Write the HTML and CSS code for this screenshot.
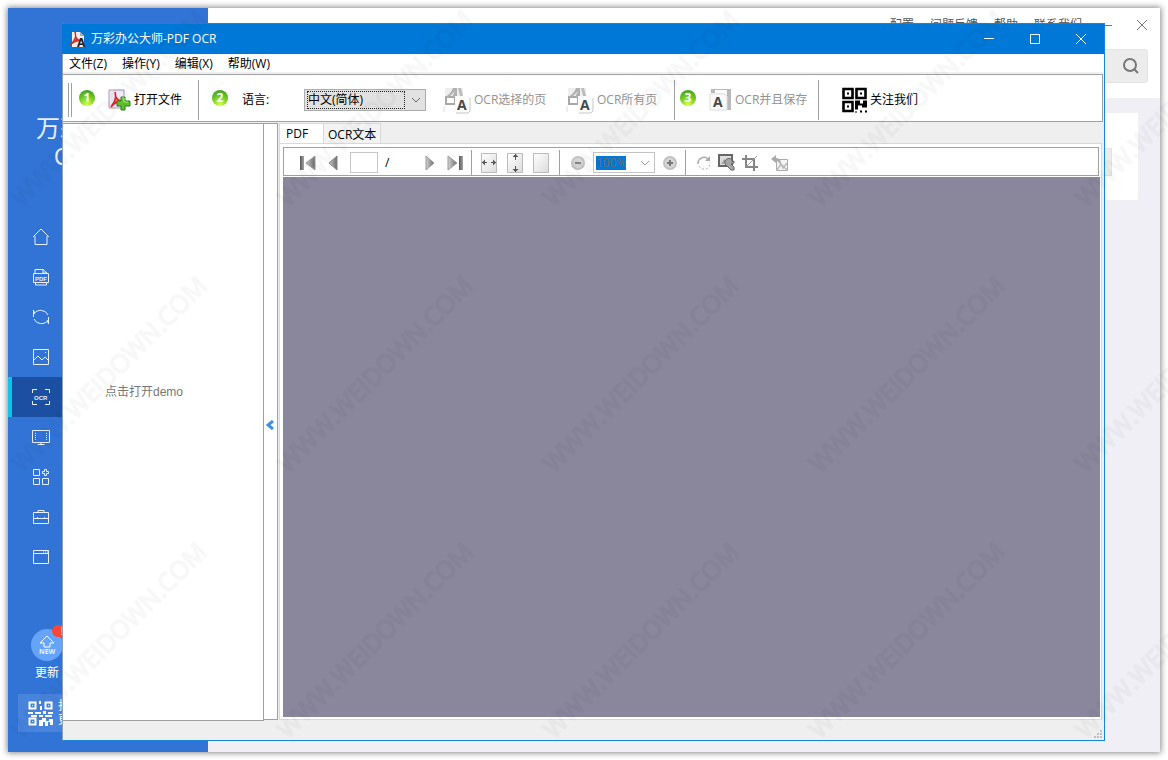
FILE: index.html
```html
<!DOCTYPE html>
<html lang="zh-CN">

<head>
    <meta charset="UTF-8">
    <meta name="viewport" content="width=device-width, initial-scale=1.0">
    <title>万彩办公大师-PDF OCR</title>
    <link rel="stylesheet" href="styles.css">
</head>

<body>

    <!-- shared symbols -->
    <svg class="defs" aria-hidden="true">
        <defs>
            <linearGradient id="metal" x1="0" x2="1">
                <stop offset="0" stop-color="#d4d4d4" />
                <stop offset="1" stop-color="#686868" />
            </linearGradient>
            <linearGradient id="paper" x1="0" y1="0" x2="1" y2="1">
                <stop offset="0" stop-color="#ffffff" />
                <stop offset="1" stop-color="#dcdcdc" />
            </linearGradient>
            <linearGradient id="dark" x1="0" x2="1">
                <stop offset="0" stop-color="#555555" />
                <stop offset="1" stop-color="#a5a5a5" />
            </linearGradient>
            <symbol id="ocr-page" viewBox="0 0 28 28">
                <path d="M2 2h18v17H2z" fill="#eeeeee" />
                <path d="M3 18v-7h9v7z" fill="#fff" stroke="#a8a8a8" stroke-width="2" />
                <path d="M2 11C6 9 9 5 10 2l4 0v9H9l3-6-6 6z" fill="#b0b0b0" />
                <path d="M15 2h3l2 8h-3z" fill="#bcbcbc" />
                <path d="M1 20v6" stroke="#ddd" />
                <path d="M12 10h13l2 2v15H12z" fill="#fcfcfc" />
                <path d="M27 12v13l-2 2H13" fill="none" stroke="#c8c8c8" />
                <text x="14" y="24" class="icon-a">A</text>
            </symbol>
            <symbol id="qr" viewBox="0 0 25 25">
                <path d="M1.500 1.500h9v9h-9zM14.500 1.500h9v9h-9zM1.500 14.500h9v9h-9z" fill="none" stroke="currentColor" stroke-width="2.600" />
                <path d="M5 5h2v2H5zM18 5h2v2h-2zM5 18h2v2H5zM13 13h5v3h3v-3h4v7h-5v-2h-4v4h-3zM13 24h2v1h-2zM18 23h2v2h-2zM23 23h2v2h-2z" fill="currentColor" />
            </symbol>
        </defs>
    </svg>

    <main class="desktop">

        <!-- background window -->
        <div class="launcher">
            <aside class="sidebar">
                <h1>万彩办公大师<br>OfficeBox</h1>
                <nav class="side-nav">
                    <a href="#" aria-label="首页"><svg viewBox="0 0 18 18"><path d="M1 9 9 1l8 8M3 8v8.500h12V8" /></svg></a>
                    <a href="#" aria-label="PDF"><svg viewBox="0 0 18 18"><path d="M3 5V1.500h8l4 3.500M11 1.500V5h4M1.500 5.500h15v9h-15zM3.500 15v2h11v-2" /><text x="3" y="12.500" class="tiny">PDF</text></svg></a>
                    <a href="#" aria-label="转换"><svg viewBox="0 0 18 18"><path d="M1.500 9V2l1 3M2 6a8 8 0 0 1 14 1M16.500 9v7l-1-3M16 12a8 8 0 0 1-14-1" /></svg></a>
                    <a href="#" aria-label="图片"><svg viewBox="0 0 18 18"><path d="M1.500 1.500h15v15h-15zM2 12l4-4 4 4 3-3 4 4M13 4.500h1" /></svg></a>
                    <a href="#" aria-label="OCR" class="active"><svg viewBox="0 0 18 18"><path d="M.5 5V1.500H5M13 1.500h4.500V5M.5 13v3.500H5M13 16.500h4.500V13" /><text x="2" y="12" class="tiny">OCR</text></svg></a>
                    <a href="#" aria-label="录屏"><svg viewBox="0 0 18 18"><path d="M.5 2.500h17v12H.5zM9 15v2M5.500 16.500h7" /><path d="M3.500 5v8M14.500 5v8" stroke-dasharray="1 1" /></svg></a>
                    <a href="#" aria-label="工具"><svg viewBox="0 0 18 18"><path d="M1.500 1.500h6v6h-6zM1.500 10.500h6v6h-6zM10.500 10.500h6v6h-6zM12.500 1.500h2v2h2v2h-2v2h-2v-2h-2v-2h2z" /></svg></a>
                    <a href="#" aria-label="办公"><svg viewBox="0 0 18 18"><path d="M1.500 4.500h15v11h-15zM6 4V2.500h6V4M1.500 10.500h15M5.500 9v2M12.500 9v2" /></svg></a>
                    <a href="#" aria-label="窗口"><svg viewBox="0 0 18 18"><path d="M1.500 2.500h15v13h-15zM2 5.500h15M11 4h1M13 4h1M15 4h1" /></svg></a>
                </nav>
                <div class="update">
                    <button type="button" aria-label="更新">
                        <svg viewBox="0 0 18 20"><path d="m9 1 7 7h-4v4H6V8H2z" /><text x="1" y="18.500" class="new">NEW</text></svg>
                        <span class="dot">!</span>
                    </button>
                    <span>更新</span>
                </div>
                <div class="follow">
                    <svg viewBox="0 0 25 25"><path d="M1.500 1.500h6v6h-6zM17.500 1.500h6v6h-6zM1.500 17.500h6v6h-6z" fill="none" stroke="currentColor" stroke-width="2" /><path d="M4 4h1v1H4zM20 4h1v1h-1zM4 20h1v1H4zM11 0h2v3h-2zM12 5h2v4h-2zM0 11h5v2H0zM7 11h6v2H7zM15 10h3v3h-3zM20 11h5v2h-5zM3 14h6v2H3zM11 14h4v2h-4zM17 14h7v2h-7zM11 19h3v-2h4v3h3v-2h4v6h-3v-3h-2v4h-3v-4h-2v4h-4z" fill="currentColor" /></svg>
                    <span>扫码关注<br>更多惊喜</span>
                </div>
            </aside>

            <section class="launcher-main">
                <header class="launcher-head">
                    <nav class="top-nav">
                        <a href="#">配置</a>
                        <a href="#">问题反馈</a>
                        <a href="#">帮助</a>
                        <a href="#">联系我们</a>
                        <button type="button" aria-label="最小化"><svg viewBox="0 0 12 12"><path d="M0 6.500h12" /></svg></button>
                        <button type="button" aria-label="关闭"><svg viewBox="0 0 12 12"><path d="m1 1 10 10M11 1 1 11" /></svg></button>
                    </nav>
                    <div class="search">
                        <input type="text" aria-label="搜索">
                        <svg viewBox="0 0 16 16"><circle cx="7" cy="7" r="6" /><path d="m11 11 4 4" /></svg>
                    </div>
                </header>
                <div class="card"><div class="card-field"></div></div>
            </section>
        </div>

        <!-- PDF OCR window -->
        <div class="window">
            <header class="titlebar">
                <svg class="app-icon" viewBox="0 0 17 17">
                    <path d="M3 1h8l4 4v11H3z" fill="#f3eded" />
                    <path d="M11 1v4h4" fill="#aaa" />
                    <path d="M1 14C5 10 8 5 6 1c0 6 4 9 8 9-5-1-9 1-13 4z" fill="#e8372c" stroke="#b92722" />
                    <text x="8" y="16" class="icon-a">A</text>
                </svg>
                <span class="title">万彩办公大师-PDF OCR</span>
                <button type="button" aria-label="最小化"><svg viewBox="0 0 12 12"><path d="M1 5.500h10" /></svg></button>
                <button type="button" aria-label="最大化"><svg viewBox="0 0 12 12"><path d="M1.500 1.500h9v9h-9z" /></svg></button>
                <button type="button" aria-label="关闭"><svg viewBox="0 0 12 12"><path d="m1 1 10 10M11 1 1 11" /></svg></button>
            </header>

            <nav class="menubar">
                <button type="button">文件(Z)</button>
                <button type="button">操作(Y)</button>
                <button type="button">编辑(X)</button>
                <button type="button">帮助(W)</button>
            </nav>

            <div class="toolbar">
                <div class="grip"></div>
                <div class="group open">
                    <span class="step">1</span>
                    <button type="button">
                        <svg width="23" height="22" viewBox="0 0 23 22">
                            <path d="M1 1h15v18H1z" fill="#f1e9f8" stroke="#a99cb5" />
                            <path d="M3 18C6 14 9 8 7 3c0 6 3 9 8 9-5 0-9 2-12 6z" fill="#ff7160" stroke="#df2222" stroke-width="1.500" />
                            <path d="M13 8h4v4h5v5h-5v4h-4v-4H9v-5h4z" fill="#5fc52e" stroke="#267d20" />
                            <path d="M14 9h2v4h4" fill="none" stroke="#a9ec78" />
                        </svg>
                        打开文件
                    </button>
                </div>
                <div class="group language">
                    <span class="step">2</span>
                    <label for="lang">语言:</label>
                    <div class="select">
                        <select id="lang">
                            <option>中文(简体)</option>
                            <option>English</option>
                        </select>
                        <svg viewBox="0 0 10 6"><path d="m1 1 4 4 4-4" /></svg>
                    </div>
                    <button type="button" class="ocr-selected" disabled><svg width="28" height="28"><use href="#ocr-page" /></svg>OCR选择的页</button>
                    <button type="button" class="ocr-all" disabled><svg width="28" height="28"><use href="#ocr-page" /></svg>OCR所有页</button>
                </div>
                <div class="group save">
                    <span class="step">3</span>
                    <button type="button" disabled>
                        <svg width="23" height="24" viewBox="0 0 23 24">
                            <path d="M2 1h20v21H12V5H2z" fill="#b9b9b9" />
                            <path d="M6 2h12v10H6z" fill="#fafafa" />
                            <path d="M1 6h15l2 2v14H1z" fill="#fafafa" stroke="#ddd" />
                            <text x="4" y="19" class="icon-a">A</text>
                        </svg>
                        OCR并且保存
                    </button>
                </div>
                <div class="group follow-us">
                    <button type="button"><svg width="25" height="26"><use href="#qr" /></svg>关注我们</button>
                </div>
            </div>

            <div class="workspace">
                <div class="pages"><a href="#">点击打开demo</a></div>
                <button type="button" class="splitter" aria-label="折叠"><svg viewBox="0 0 8 10"><path d="M7 1 2 5l5 4" /></svg></button>
                <div class="viewer">
                    <div class="tabs" role="tablist">
                        <button type="button" role="tab" aria-selected="true" class="current">PDF</button>
                        <button type="button" role="tab" aria-selected="false">OCR文本</button>
                    </div>
                    <div class="tab-body">
                        <div class="viewbar">
                            <div class="view-group paging">
                                <button type="button" aria-label="第一页"><svg width="16" height="16"><path d="M0 1h4v14H0z" fill="url(#dark)" /><path d="M15 1v14L6 8z" fill="url(#metal)" stroke="#999" /></svg></button>
                                <button type="button" aria-label="上一页"><svg width="10" height="16"><path d="M9 1v14L1 8z" fill="url(#metal)" stroke="#888" /></svg></button>
                                <input type="text" aria-label="页码">
                                <span class="slash">/</span>
                                <button type="button" aria-label="下一页"><svg width="10" height="16"><path d="M1 1v14l8-7z" fill="url(#metal)" stroke="#999" /></svg></button>
                                <button type="button" aria-label="最后一页"><svg width="16" height="16"><path d="M1 1v14l9-7z" fill="url(#metal)" stroke="#999" /><path d="M12 1h4v14h-4z" fill="url(#dark)" /></svg></button>
                            </div>
                            <div class="view-group fit">
                                <button type="button" aria-label="适合宽度"><svg width="16" height="20"><path d="M.5.5h15v19H.5z" fill="url(#paper)" stroke="#bbb" /><path d="M1 9.500h5M10 9.500h5" stroke="#555" /><path d="m1 9.500 3-3v6zM15 9.500l-3-3v6z" fill="#555" /></svg></button>
                                <button type="button" aria-label="适合高度"><svg width="16" height="20"><path d="M.5.5h15v19H.5z" fill="url(#paper)" stroke="#bbb" /><path d="M8.500 1v6M8.500 13v6" stroke="#555" /><path d="m8.500 1-3 3h6zM8.500 19l-3-3h6z" fill="#555" /></svg></button>
                                <button type="button" aria-label="实际大小"><svg width="16" height="20"><path d="M.5.5h15v19H.5z" fill="url(#paper)" stroke="#bbb" /></svg></button>
                            </div>
                            <div class="view-group zoom">
                                <button type="button" aria-label="缩小"><svg width="14" height="14"><circle cx="7" cy="7" r="6" fill="#d6d6d6" stroke="#c2c2c2" stroke-width="2" /><path d="M4 7h6" stroke="#888" stroke-width="2" /></svg></button>
                                <div class="zoom-box">
                                    <select aria-label="缩放">
                                        <option>100%</option>
                                        <option>50%</option>
                                    </select>
                                    <svg viewBox="0 0 10 6"><path d="m1 1 4 4 4-4" /></svg>
                                </div>
                                <button type="button" aria-label="放大"><svg width="14" height="14"><circle cx="7" cy="7" r="6" fill="#d6d6d6" stroke="#c2c2c2" stroke-width="2" /><path d="M4 7h6M7 4v6" stroke="#777" stroke-width="2" /></svg></button>
                            </div>
                            <div class="view-group edit">
                                <button type="button" aria-label="旋转"><svg width="14" height="16"><path d="M11 4a6 6 0 0 0-10 5" fill="none" stroke="#aaa" stroke-width="1.500" /><path d="M2 11a6 6 0 0 0 11-1V7" fill="none" stroke="#aaa" stroke-dasharray="2 2" /><path d="M13 1v5H8z" fill="#aaa" /></svg></button>
                                <button type="button" aria-label="设置"><svg width="17" height="17"><path d="M1 1h13v11H1z" fill="#ddd" stroke="#666" stroke-width="2" /><path d="m3 10 3-5 3 2 3-3v6z" fill="#aaa" /><path d="M14 6a4 4 0 1 0-5 6l4 4 3 0v-3l-3-3 3-1V7l-2 1z" fill="#a5a5a5" stroke="#666" /></svg></button>
                                <button type="button" aria-label="裁剪"><svg width="16" height="16"><path d="M4 0v12h12M0 4h12v12" fill="none" stroke="#858585" stroke-width="2" /><path d="M4 12 15 1" stroke="#999" /></svg></button>
                                <button type="button" aria-label="恢复" class="restore"><svg width="17" height="16"><path d="M5.500 4.500h11v11h-11z" fill="#f5f5f5" stroke="#aaa" /><path d="m6 15 4-6 2 4 4-5M7 6l9 9" fill="none" stroke="#bbb" stroke-width="1.500" /><path d="m0 4 5-4v3c4 0 5 3 5 6C8 6 7 6 5 6v2z" fill="#aaa" /></svg></button>
                            </div>
                        </div>
                        <div class="canvas"></div>
                    </div>
                </div>
            </div>

            <footer class="statusbar">
                <svg width="9" height="9"><path d="M6 0h2v2H6zM3 3h2v2H3zM6 3h2v2H6zM0 6h2v2H0zM3 6h2v2H3zM6 6h2v2H6z" fill="#bfbfbf" /></svg>
            </footer>
        </div>

    </main>

    <!-- watermark over everything -->
    <svg class="watermark" aria-hidden="true">
        <defs>
            <pattern id="mark" x="0" y="0" width="266" height="266" patternUnits="userSpaceOnUse">
                <text transform="translate(22 208) rotate(-45)">WWW.WEIDOWN.COM</text>
            </pattern>
        </defs>
        <rect width="100%" height="100%" fill="url(#mark)" />
    </svg>

</body>

</html>
```
FILE: styles.css
```css
* {
    box-sizing: border-box;
}

body {
    margin: 0;
    background: #fff;
    color: #000;
    font: 12px/16px "Open Sans", "Noto Sans CJK SC", sans-serif;
    overflow: hidden;
}

button,
input,
select {
    font: inherit;
    color: inherit;
    margin: 0;
    padding: 0;
    border: 0;
    border-radius: 0;
    background: none;
}

button {
    display: flex;
    align-items: center;
    white-space: nowrap;
}

a {
    color: inherit;
    text-decoration: none;
}

svg {
    display: block;
    flex: none;
}

.defs {
    position: absolute;
    width: 0;
    height: 0;
}

.icon-a {
    font: bold 14px "Open Sans", sans-serif;
    fill: #484848;
}

.desktop {
    position: relative;
    height: 100vh;
    padding: 8px;
}

/* background window */
.launcher {
    display: flex;
    height: 100%;
    background: #f0eff5;
    box-shadow: 0 0 6px 1px #888;
}

.sidebar {
    display: flex;
    flex-direction: column;
    width: 200px;
    background: #3274d6;
    color: #fff;
}

.sidebar h1 {
    height: 209px;
    margin: 0;
    padding-top: 106px;
    color: #e5efff;
    font-size: 24px;
    line-height: 28px;
    font-weight: normal;
    text-align: center;
}

.side-nav a {
    display: flex;
    align-items: center;
    height: 40px;
    padding-left: 20px;
    border-left: 4px solid transparent;
}

.side-nav .active {
    background: #1a4fa1;
    border-color: #13c2e9;
}

.side-nav svg {
    width: 18px;
    height: 18px;
    fill: none;
    stroke: #e7f0ff;
}

.side-nav text,
.update text {
    fill: #e7f0ff;
    stroke: none;
}

.tiny {
    font: bold 6px "Liberation Sans", sans-serif;
}

.new {
    font: bold 7px "Open Sans", sans-serif;
}

.update {
    display: flex;
    flex-direction: column;
    align-items: center;
    gap: 4px;
    width: 32px;
    margin: 52px 0 0 23px;
}

.update button {
    position: relative;
    justify-content: center;
    width: 32px;
    height: 32px;
    border-radius: 50%;
    background: #66a3fb;
}

.update button svg {
    width: 18px;
    height: 20px;
    fill: none;
    stroke: #fff;
}

.update span {
    white-space: nowrap;
}

.dot {
    position: absolute;
    top: -4px;
    left: 21px;
    width: 20px;
    height: 12px;
    border-radius: 6px;
    background: #fa4632;
    font-size: 10px;
    line-height: 12px;
}

.follow {
    display: flex;
    align-items: center;
    gap: 5px;
    height: 38px;
    margin: 13px 10px 0;
    padding-left: 10px;
    background: #4883dc;
    line-height: 14px;
}

.follow svg {
    width: 25px;
    height: 25px;
}

.launcher-main {
    flex: 1;
}

.launcher-head {
    height: 90px;
    padding-right: 12px;
    background: #fff;
}

.top-nav {
    display: flex;
    justify-content: flex-end;
    align-items: center;
    gap: 16px;
    height: 34px;
    color: #555;
}

.top-nav svg {
    width: 12px;
    height: 12px;
    fill: none;
    stroke: #777;
}

.top-nav button {
    margin-left: 2px;
}

.top-nav button:last-child {
    margin: 0 0 0 8px;
}

.search {
    display: flex;
    align-items: center;
    width: 300px;
    height: 34px;
    margin: 7px 0 0 auto;
    padding-right: 8px;
    background: #ececec;
    border: 1px solid #e4e4e4;
    border-radius: 3px;
}

.search input {
    flex: 1;
}

.search svg {
    width: 16px;
    height: 16px;
    fill: none;
    stroke: #777;
    stroke-width: 2;
}

.card {
    display: flex;
    justify-content: flex-end;
    align-items: center;
    height: 87px;
    margin: 15px 22px;
    padding: 10px 26px 0;
    background: #fff;
}

.card-field {
    width: 200px;
    height: 28px;
    background: #ececec;
    border: 1px solid #e2e2e2;
}

/* front window */
.window {
    position: absolute;
    top: 23px;
    right: 63px;
    bottom: 19px;
    left: 62px;
    display: flex;
    flex-direction: column;
    background: #efefef;
    border: 1px solid #1883da;
    border-left-color: #8ba0b8;
}

.titlebar {
    display: flex;
    flex: none;
    align-items: center;
    height: 30px;
    margin-left: -1px;
    padding-left: 7px;
    background: #0078d7;
    color: #fff;
}

.app-icon {
    width: 17px;
    height: 17px;
}

.app-icon .icon-a {
    font-size: 12px;
    fill: #222;
}

.title {
    flex: 1;
    padding-left: 5px;
}

.titlebar button {
    justify-content: center;
    width: 46px;
    height: 30px;
}

.titlebar button svg {
    width: 12px;
    height: 12px;
    fill: none;
    stroke: #fff;
}

.menubar {
    display: flex;
    flex: none;
    gap: 15px;
    height: 20px;
    padding: 2px 0 0 6px;
    background: #fff;
    border-bottom: 2px solid #efefef;
}

.toolbar {
    display: flex;
    flex: none;
    height: 48px;
    padding: 5px 0 1px;
    margin-right: 1px;
    background: #fff;
    border: 1px solid #a0a0a0;
    border-left: 0;
}

.grip {
    width: 4px;
    margin: 3px 0 3px 5px;
    border: 1px solid #a0a0a0;
    border-width: 0 1px;
}

.group {
    display: flex;
    align-items: center;
    border-right: 1px solid #a0a0a0;
}

.group button {
    gap: 3px;
}

.group button:disabled {
    color: #929292;
}

.step {
    width: 16px;
    height: 16px;
    margin-bottom: 4px;
    border-radius: 50%;
    background: radial-gradient(circle at 50% 90%, #d7ff4a, #69c521 55%, #38902d);
    color: #fff;
    font-weight: bold;
    text-align: center;
}

.open {
    width: 127px;
    padding-left: 7px;
    gap: 13px;
}

.language {
    width: 476px;
    padding-left: 13px;
}

.language label {
    width: 62px;
    margin-left: 14px;
}

.select {
    display: flex;
    align-items: center;
    width: 122px;
    height: 22px;
    padding: 0 4px 0 2px;
    background: #e1e1e1;
    border: 1px solid #adadad;
}

select {
    appearance: none;
    outline: 0;
}

.select select {
    flex: 1;
    height: 18px;
    margin-right: 6px;
    border: 1px dotted #222;
}

.select svg,
.zoom-box svg {
    width: 10px;
    height: 6px;
    fill: none;
    stroke: #666;
}

.ocr-selected {
    width: 106px;
    margin-left: 17px;
}

.ocr-all {
    margin-left: 17px;
}

.save {
    width: 144px;
    padding-left: 5px;
    gap: 13px;
}

.follow-us {
    padding-left: 23px;
    border: 0;
}

.workspace {
    display: flex;
    flex: 1;
    min-height: 0;
    padding: 1px 2px 0 0;
}

.pages {
    display: flex;
    flex: none;
    align-items: center;
    width: 201px;
    padding: 0 0 60px 42px;
    background: #fff;
    border: 1px solid #a0a0a0;
    border-left: 0;
    color: #777;
    font-family: "Liberation Sans", "Noto Sans CJK SC", sans-serif;
}

.splitter {
    flex: none;
    width: 14px;
    margin-bottom: 1px;
    padding: 6px 0 0 2px;
    background: #fff;
    border: 1px solid #a0a0a0;
    border-left: 0;
}

.splitter svg {
    width: 8px;
    height: 10px;
    fill: none;
    stroke: #3c91e5;
    stroke-width: 3;
}

.viewer {
    display: flex;
    flex: 1;
    flex-direction: column;
    margin-left: 1px;
}

.tabs {
    display: flex;
    height: 20px;
}

.tabs button {
    padding: 3px 4px 0;
    background: #f3f3f3;
    border: 1px solid #d9d9d9;
    border-width: 1px 1px 0 0;
}

.tabs .current {
    width: 45px;
    padding: 0 6px;
    background: #fff;
    border-left-width: 1px;
}

.tab-body {
    display: flex;
    flex: 1;
    flex-direction: column;
    gap: 1px;
    padding: 3px 1px 2px 3px;
    margin-bottom: 1px;
    background: #fff;
    border: 1px solid #d9d9d9;
}

.viewbar {
    display: flex;
    height: 29px;
    margin-right: 1px;
    border: 1px solid #a0a0a0;
}

.view-group {
    display: flex;
    align-items: center;
    margin: 2px 0 0;
    border-right: 1px solid #a0a0a0;
}

.paging {
    width: 188px;
    padding-left: 16px;
    gap: 12px;
}

.paging input {
    width: 28px;
    height: 21px;
    border: 1px solid #c8c8c8;
}

.slash {
    width: 28px;
    margin-left: -5px;
}

.fit {
    width: 88px;
    padding-left: 9px;
    gap: 10px;
}

.zoom {
    width: 126px;
    padding-left: 11px;
    gap: 8px;
}

.zoom-box {
    display: flex;
    align-items: center;
    justify-content: space-between;
    width: 62px;
    height: 21px;
    padding: 0 4px 0 2px;
    border: 1px solid #c4c4c4;
}

.zoom-box svg {
    stroke: #999;
}

.zoom-box select {
    width: 30px;
    height: 14px;
    background: #0078d7;
    color: #6d6d6d;
    line-height: 14px;
}

.edit {
    padding-left: 11px;
    gap: 7px;
    border: 0;
}

.restore {
    margin-left: 6px;
}

.canvas {
    flex: 1;
    background: #8a879d;
}

.statusbar {
    display: flex;
    flex: none;
    justify-content: flex-end;
    align-items: flex-end;
    height: 19px;
    padding: 0 1px 1px;
}

.watermark {
    position: fixed;
    inset: 0;
    width: 100%;
    height: 100%;
    pointer-events: none;
}

.watermark text {
    font: 25px "Open Sans", sans-serif;
    fill: #000;
    fill-opacity: 0.01;
    stroke: #000;
    stroke-width: 2;
    stroke-opacity: 0.02;
}
```
